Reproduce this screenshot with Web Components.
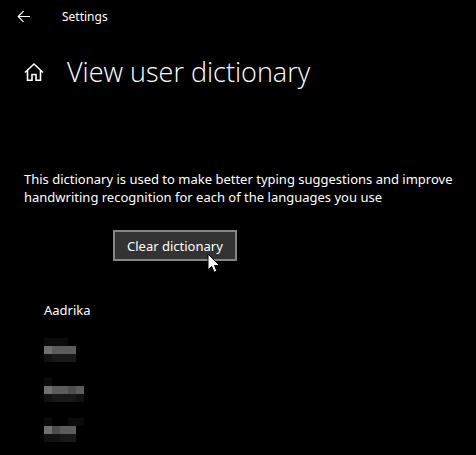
<!DOCTYPE html>
<html lang="en">
<head>
<meta charset="utf-8">
<title>Settings</title>
<style>
  html {
    background: #000;
  }

  body {
    margin: 0;
    color: #fff;
    font: 13px/18px "Segoe UI", "Noto Sans", "Open Sans", sans-serif;
  }
</style>
</head>
<body>
<settings-page heading="View user dictionary">
  <title-bar slot="bar">Settings</title-bar>
  <p slot="intro">This dictionary is used to make better typing suggestions and improve handwriting recognition for each of the languages you use</p>
  <action-button slot="action">Clear dictionary</action-button>
  <word-list slot="words">
    <word-item>Aadrika</word-item>
    <word-item><pixel-mask rows="1110 6555 2333"></pixel-mask></word-item>
    <word-item><pixel-mask rows="10000 65545 23332"></pixel-mask></word-item>
    <word-item><pixel-mask rows="10011 64550 22330"></pixel-mask></word-item>
  </word-list>
</settings-page>

<script>
class TitleBar extends HTMLElement {
  constructor() {
    super();
    this.attachShadow({ mode: "open" });
    this.shadowRoot.innerHTML = `
      <style>
        :host {
          display: flex;
          align-items: center;
          gap: 30px;
          height: 33px;
          padding-left: 16px;
          font-size: 12px;
        }

        button {
          display: flex;
          padding: 0;
          border: 0;
          background: none;
          color: inherit;
        }
      </style>
      <button type="button" aria-label="Back">
        <svg width="16" height="16" viewBox="0 0 16 16" fill="none" stroke="currentColor" stroke-width="1.2">
          <path d="M14 7.5H2.5M7.5 2.2L2.2 7.5L7.5 12.8" />
        </svg>
      </button>
      <span><slot></slot></span>
    `;
  }
}

class SettingsPage extends HTMLElement {
  constructor() {
    super();
    this.attachShadow({ mode: "open" });
  }

  connectedCallback() {
    this.shadowRoot.innerHTML = `
      <style>
        :host {
          display: block;
        }

        header {
          display: flex;
          align-items: center;
          gap: 23px;
          height: 40px;
          margin-top: 19px;
          padding-left: 24px;
        }

        a {
          display: flex;
          color: inherit;
        }

        h1 {
          margin: 0;
          font: 300 27px/40px "Segoe UI", "Open Sans", "Noto Sans", sans-serif;
          white-space: nowrap;
        }

        main {
          padding: 78px 12px 0 24px;
        }

        ::slotted(p) {
          margin: 0;
        }

        .action {
          display: flex;
          margin: 24px 0 29px 89px;
        }

        .words {
          padding-left: 20px;
        }
      </style>
      <slot name="bar"></slot>
      <header>
        <a href="#home" aria-label="Home">
          <svg width="20" height="20" viewBox="0 0 20 20" fill="none" stroke="currentColor" stroke-width="1.6">
            <path d="M1 10.5L10 2L19 10.5M3.5 8.5V18.3H8V12.5H12V18.3H16.5V8.5" />
          </svg>
        </a>
        <h1>${this.getAttribute("heading") || ""}</h1>
      </header>
      <main>
        <slot name="intro"></slot>
        <div class="action"><slot name="action"></slot></div>
        <div class="words"><slot name="words"></slot></div>
      </main>
    `;
  }
}

class ActionButton extends HTMLElement {
  constructor() {
    super();
    this.attachShadow({ mode: "open" });
    this.shadowRoot.innerHTML = `
      <style>
        :host {
          display: block;
          position: relative;
        }

        button {
          display: block;
          padding: 5px 12px 4px;
          border: 2px solid #858585;
          background: #333;
          color: inherit;
          font: inherit;
        }

        /* mouse pointer resting on the button */
        svg {
          position: absolute;
          right: 16px;
          top: 23px;
        }
      </style>
      <button type="button"><slot></slot></button>
      <svg width="14" height="21" viewBox="0 0 14 21" aria-hidden="true">
        <path d="M1 1V17L4.7 13.5L7.2 19.3L9.9 18.1L7.5 12.5H12.5Z" fill="#fff" stroke="#000" stroke-width="1" />
      </svg>
    `;
  }
}

class WordList extends HTMLElement {
  constructor() {
    super();
    this.attachShadow({ mode: "open" });
    this.shadowRoot.innerHTML = `
      <style>
        :host {
          display: grid;
          grid-auto-rows: 40px;
        }
      </style>
      <slot></slot>
    `;
  }

  connectedCallback() {
    this.setAttribute("role", "list");
  }
}

class WordItem extends HTMLElement {
  constructor() {
    super();
    this.attachShadow({ mode: "open" });
    this.shadowRoot.innerHTML = `
      <style>
        :host {
          display: flex;
          align-items: center;
        }
      </style>
      <slot></slot>
    `;
  }

  connectedCallback() {
    this.setAttribute("role", "listitem");
  }
}

// Hidden word, one digit per cell: 0 is clear, 6 is the brightest.
class PixelMask extends HTMLElement {
  static shades = ["transparent", "#0b0b0b", "#121212", "#191919", "#4d4d4d", "#5c5c5c", "#707070"];

  constructor() {
    super();
    this.attachShadow({ mode: "open" });
  }

  connectedCallback() {
    const rows = (this.getAttribute("rows") || "").split(" ");
    const cells = rows
      .join("")
      .split("")
      .map((n) => `<i style="background:${PixelMask.shades[n]}"></i>`)
      .join("");

    this.shadowRoot.innerHTML = `
      <style>
        :host {
          display: grid;
          grid-template-columns: repeat(${rows[0].length}, 8px);
          grid-auto-rows: 8px;
        }
      </style>
      ${cells}
    `;
  }
}

customElements.define("title-bar", TitleBar);
customElements.define("settings-page", SettingsPage);
customElements.define("action-button", ActionButton);
customElements.define("word-list", WordList);
customElements.define("word-item", WordItem);
customElements.define("pixel-mask", PixelMask);
</script>
</body>
</html>
